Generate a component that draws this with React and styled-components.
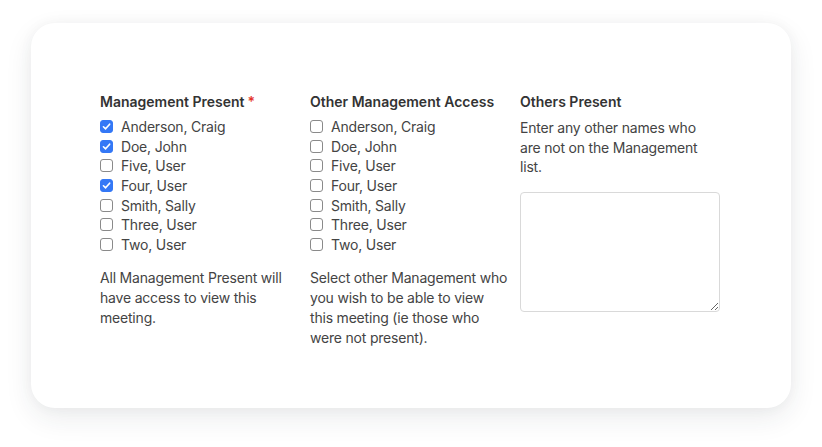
import React, { useState } from 'react';
import styled, { createGlobalStyle } from 'styled-components';

const GlobalStyle = createGlobalStyle`
  html, body {
    margin: 0;
    padding: 0;
    background: #ffffff;
  }
  body {
    font-family: Inter, "Liberation Sans", Arial, sans-serif;
    -webkit-font-smoothing: antialiased;
  }
`;

const Page = styled.div`
  padding: 23px 31px 39px;
`;

const Card = styled.div`
  background: #ffffff;
  border-radius: 24px;
  box-shadow: 0 10px 28px rgba(30, 40, 60, 0.09), 0 0 14px rgba(30, 40, 60, 0.04);
  height: 385px;
  box-sizing: border-box;
  padding: 69px 69px 0;
`;

const Columns = styled.div`
  display: grid;
  grid-template-columns: 200px 200px 200px;
  column-gap: 10px;
`;

const Column = styled.div`
  display: flex;
  flex-direction: column;
`;

const Heading = styled.div`
  font-size: 14px;
  font-weight: 600;
  color: #333;
  line-height: 20px;
  margin-bottom: 5px;
`;

const Required = styled.span`
  color: #e5342a;
  margin-left: 3px;
`;

const List = styled.div`
  display: flex;
  flex-direction: column;
`;

const Row = styled.label`
  display: flex;
  align-items: center;
  gap: 8px;
  height: 19.6px;
  font-size: 14px;
  letter-spacing: -0.2px;
  color: #444;
  cursor: pointer;
`;

const Box = styled.span`
  width: 13px;
  height: 13px;
  box-sizing: border-box;
  border-radius: 3px;
  border: 1px solid ${p => (p.$checked ? '#3478f6' : '#8a8a8a')};
  background: ${p => (p.$checked ? '#3478f6' : '#fff')};
  display: flex;
  align-items: center;
  justify-content: center;
  flex-shrink: 0;
`;

const Help = styled.p`
  margin: 14px 0 0;
  font-size: 14px;
  line-height: 20px;
  letter-spacing: -0.2px;
  color: #444;
`;

const Intro = styled.p`
  margin: 1px 0 0;
  font-size: 14px;
  line-height: 19.7px;
  letter-spacing: -0.2px;
  color: #444;
`;

const Notes = styled.textarea`
  margin-top: 15px;
  width: 200px;
  height: 120px;
  box-sizing: border-box;
  border: 1px solid #d9d9d9;
  border-radius: 4px;
  resize: vertical;
  font: inherit;
  font-size: 14px;
  padding: 6px 8px;
  outline: none;
`;

const names = [
  'Anderson, Craig',
  'Doe, John',
  'Five, User',
  'Four, User',
  'Smith, Sally',
  'Three, User',
  'Two, User',
];

const Check = ({ checked, onToggle, label }) => (
  <Row onClick={onToggle}>
    <Box $checked={checked}>
      {checked && (
        <svg width="9" height="9" viewBox="0 0 10 10">
          <path d="M1.6 5.3 L4 7.6 L8.5 2.4" fill="none" stroke="#fff" strokeWidth="1.8" strokeLinecap="round" strokeLinejoin="round" />
        </svg>
      )}
    </Box>
    {label}
  </Row>
);

const CheckList = ({ initial }) => {
  const [sel, setSel] = useState(initial);
  return (
    <List>
      {names.map(n => (
        <Check
          key={n}
          label={n}
          checked={sel.includes(n)}
          onToggle={e => {
            e.preventDefault();
            setSel(sel.includes(n) ? sel.filter(x => x !== n) : [...sel, n]);
          }}
        />
      ))}
    </List>
  );
};

export default function App() {
  return (
    <>
      <GlobalStyle />
      <Page>
        <Card>
          <Columns>
            <Column>
              <Heading>Management Present<Required>*</Required></Heading>
              <CheckList initial={['Anderson, Craig', 'Doe, John', 'Four, User']} />
              <Help>All Management Present will have access to view this meeting.</Help>
            </Column>
            <Column>
              <Heading>Other Management Access</Heading>
              <CheckList initial={[]} />
              <Help>Select other Management who you wish to be able to view this meeting (ie those who were not present).</Help>
            </Column>
            <Column>
              <Heading>Others Present</Heading>
              <Intro>Enter any other names who are not on the Management list.</Intro>
              <Notes />
            </Column>
          </Columns>
        </Card>
      </Page>
    </>
  );
}
